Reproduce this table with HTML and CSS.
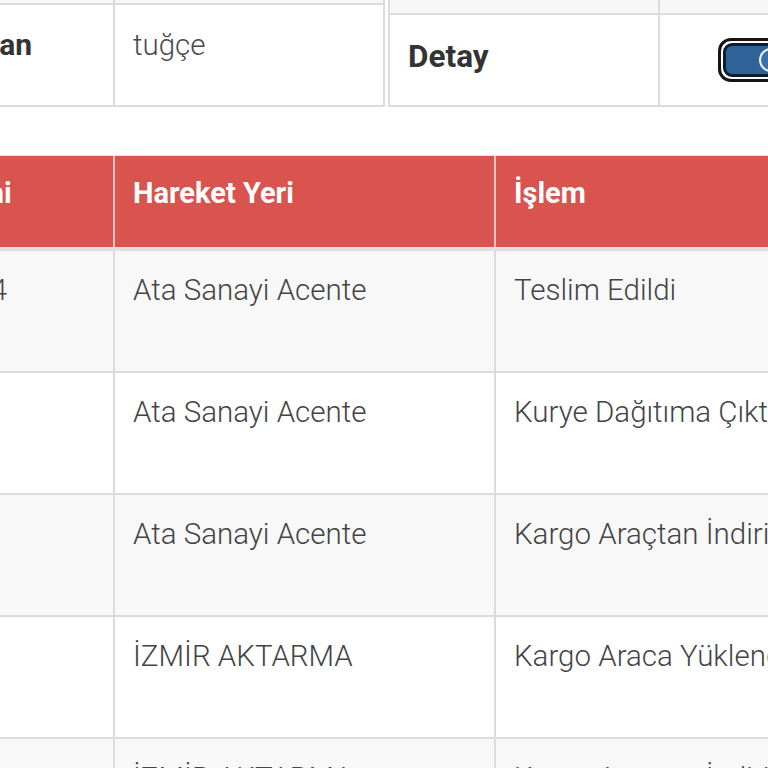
FILE: index.html
```html
<!DOCTYPE html>
<html lang="tr">
<head>
<meta charset="utf-8">
<title>Kargo Takip</title>
<link rel="stylesheet" href="styles.css">
</head>
<body>
<div class="page">
  <section class="info">
    <div class="info-table info-left">
      <div class="info-row info-row-top">
        <div class="info-cell info-label"></div>
        <div class="info-cell"></div>
      </div>
      <div class="info-row info-row-main">
        <div class="info-cell info-label"><span class="label-text">Teslim Alan</span></div>
        <div class="info-cell"><span class="value-text">tuğçe</span></div>
      </div>
    </div>
    <div class="info-table info-right">
      <div class="info-row info-row-top2">
        <div class="info-cell info-label2"></div>
        <div class="info-cell"></div>
      </div>
      <div class="info-row info-row-main2">
        <div class="info-cell info-label2"><span class="label-text detay">Detay</span></div>
        <div class="info-cell toggle-cell">
          <div class="toggle">
            <div class="toggle-inner"><span class="toggle-knob"></span></div>
          </div>
        </div>
      </div>
    </div>
  </section>

  <section class="moves">
    <div class="mrow mhead">
      <div class="mcell">Hareket Tarihi</div>
      <div class="mcell">Hareket Yeri</div>
      <div class="mcell">İşlem</div>
    </div>
    <div class="mrow odd">
      <div class="mcell">05 Ocak 2024</div>
      <div class="mcell">Ata Sanayi Acente</div>
      <div class="mcell">Teslim Edildi</div>
    </div>
    <div class="mrow">
      <div class="mcell"></div>
      <div class="mcell">Ata Sanayi Acente</div>
      <div class="mcell">Kurye Dağıtıma Çıktı</div>
    </div>
    <div class="mrow odd">
      <div class="mcell"></div>
      <div class="mcell">Ata Sanayi Acente</div>
      <div class="mcell">Kargo Araçtan İndirildi</div>
    </div>
    <div class="mrow">
      <div class="mcell"></div>
      <div class="mcell">İZMİR AKTARMA</div>
      <div class="mcell">Kargo Araca Yüklendi</div>
    </div>
    <div class="mrow odd">
      <div class="mcell"></div>
      <div class="mcell">İZMİR AKTARMA</div>
      <div class="mcell">Kargo Araçtan İndirildi</div>
    </div>
  </section>
</div>
</body>
</html>
```

FILE: styles.css
```css
* { box-sizing: border-box; }

html, body {
  margin: 0;
  padding: 0;
  background: #ffffff;
  overflow: hidden;
  width: 768px;
  height: 768px;
}

body {
  font-family: Roboto, "Liberation Sans", sans-serif;
  color: #444;
}

.page {
  width: 768px;
  overflow: hidden;
}

/* ---------- top info tables ---------- */
.info {
  display: flex;
  height: 107px;
}

.info-table {
  flex: 0 0 auto;
}

.info-left {
  margin-left: -145px;
  width: 530px;
  border-right: 2px solid #dcdcdc;
}

.info-right {
  margin-left: 3px;
  width: 520px;
  border-left: 2px solid #dcdcdc;
}

.info-row {
  display: grid;
  border-bottom: 2px solid #dcdcdc;
}

.info-left .info-row { grid-template-columns: 260px 1fr; }
.info-right .info-row { grid-template-columns: 270px 1fr; }

.info-row-top { height: 5px; background: #f7f7f7; }
.info-row-main { height: 102px; background: #fff; }
.info-row-top2 { height: 15px; background: #f7f7f7; }
.info-row-main2 { height: 92px; background: #fff; }

.info-cell {
  padding: 20px 18px 0;
  min-width: 0;
  white-space: nowrap;
}

.info-label, .info-label2 {
  border-right: 2px solid #dcdcdc;
}

.info-row-main2 .info-cell { padding-top: 22px; }

.label-text {
  font-size: 30px;
  line-height: 40px;
  font-weight: 700;
  color: #333;
}

.label-text.detay {
  font-size: 31.5px;
}

.value-text {
  font-size: 29.5px;
  line-height: 40px;
  font-weight: 300;
  color: #4a4a4a;
}

.toggle-cell.info-cell {
  padding: 23px 0 0 58px;
}

.toggle {
  width: 120px;
  height: 44px;
  border: 3px solid #141414;
  border-radius: 13px;
  background: #fff;
  padding: 2px;
}

.toggle-inner {
  height: 100%;
  border: 3px solid #0f1e2e;
  border-radius: 9px;
  background: #2f6398;
  display: flex;
  align-items: center;
  padding-left: 33px;
}

.toggle-knob {
  width: 24px;
  height: 24px;
  border-radius: 50%;
  border: 2px solid #e9f1fa;
  background: #3a70a6;
}

/* ---------- movements table ---------- */
.moves {
  margin-top: 48px;
  margin-left: -189px;
  width: 1100px;
}

.mrow {
  display: grid;
  grid-template-columns: 304px 381px 1fr;
  height: 122px;
  border-bottom: 2px solid #dcdcdc;
  background: #fff;
}

.mrow.odd { background: #f8f8f8; }

.mcell {
  padding: 19px 18px 0;
  border-right: 2px solid #dcdcdc;
  font-size: 29.5px;
  line-height: 40px;
  font-weight: 300;
  color: #444;
  white-space: nowrap;
}

.mhead {
  height: 96px;
  background: #d9534f;
  border-top: 1px solid #f1dede;
  border-bottom: 4px solid #e6dcdc;
}

.mhead .mcell {
  padding-top: 17px;
  color: #fff;
  font-size: 29px;
  font-weight: 700;
  border-right: 2px solid #eec3c2;
}
```
